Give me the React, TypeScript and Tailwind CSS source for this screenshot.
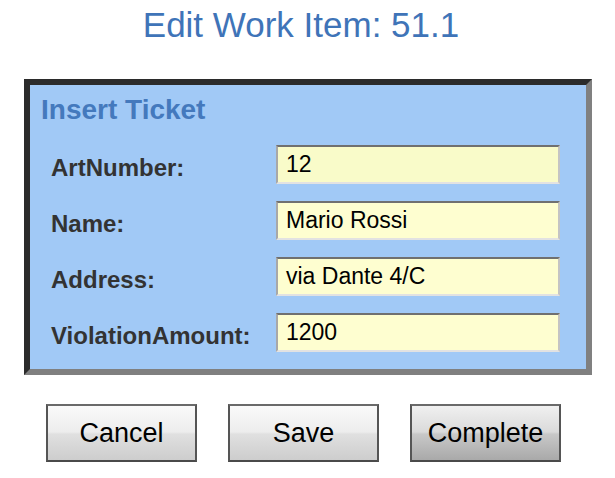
import React from "react";

const rows = [
  { label: "ArtNumber:", value: "12", bg: "bg-[#f9fbc9]" },
  { label: "Name:", value: "Mario Rossi", bg: "bg-[#fefed0]" },
  { label: "Address:", value: "via Dante 4/C", bg: "bg-[#fefed0]" },
  { label: "ViolationAmount:", value: "1200", bg: "bg-[#fefed0]" },
];

function Btn({ children, dark }: { children: React.ReactNode; dark?: boolean }) {
  return (
    <button
      className={
        "w-[151px] h-[58px] border-2 border-t-[#6a6a6a] border-l-[#555555] border-r-[#555555] border-b-[#4a4a4a] text-[27px] leading-none text-black " +
        (dark
          ? "bg-[linear-gradient(to_bottom,#f0f0f0_0%,#dadada_48%,#c8c8c8_52%,#a9a9a9_100%)]"
          : "bg-[linear-gradient(to_bottom,#fafafa_0%,#ededed_48%,#e0e0e0_52%,#cdcdcd_100%)]")
      }
    >
      {children}
    </button>
  );
}

export default function App() {
  return (
    <div
      className="w-[615px] h-[478px] bg-white overflow-hidden"
      style={{ fontFamily: '"Liberation Sans", Arial, sans-serif' }}
    >
      <div className="pt-[5px] pr-[13px] text-center text-[35px] leading-[39px] text-[#3f74b8]">
        Edit Work Item: 51.1
      </div>
      <div className="mt-[35px] ml-[24px] w-[568px] h-[296px] border-[6px] border-t-[#2b2b2b] border-l-[#2b2b2b] border-r-[#808080] border-b-[#808080] bg-[#a1c9f6] pl-[11px] pt-[9px]">
        <div className="text-[28px] leading-[32px] font-bold text-[#4479bd]">Insert Ticket</div>
        <div className="mt-[19px] flex flex-col gap-[17px]">
          {rows.map((r) => (
            <div key={r.label} className="flex items-center h-[39px]">
              <div className="w-[235px] pl-[10px] pt-[6px] text-[24px] font-bold text-[#333333] leading-none">
                {r.label}
              </div>
              <div
                className={
                  "w-[284px] h-[39px] border-2 border-t-[#707070] border-l-[#a8a8a8] border-r-[#c4c4c4] border-b-[#e2e2e2] flex items-center pl-[8px] text-[23px] text-black leading-none " +
                  r.bg
                }
              >
                {r.value}
              </div>
            </div>
          ))}
        </div>
      </div>
      <div className="mt-[29px] ml-[46px] flex gap-[31px]">
        <Btn>Cancel</Btn>
        <Btn>Save</Btn>
        <Btn dark>Complete</Btn>
      </div>
    </div>
  );
}
